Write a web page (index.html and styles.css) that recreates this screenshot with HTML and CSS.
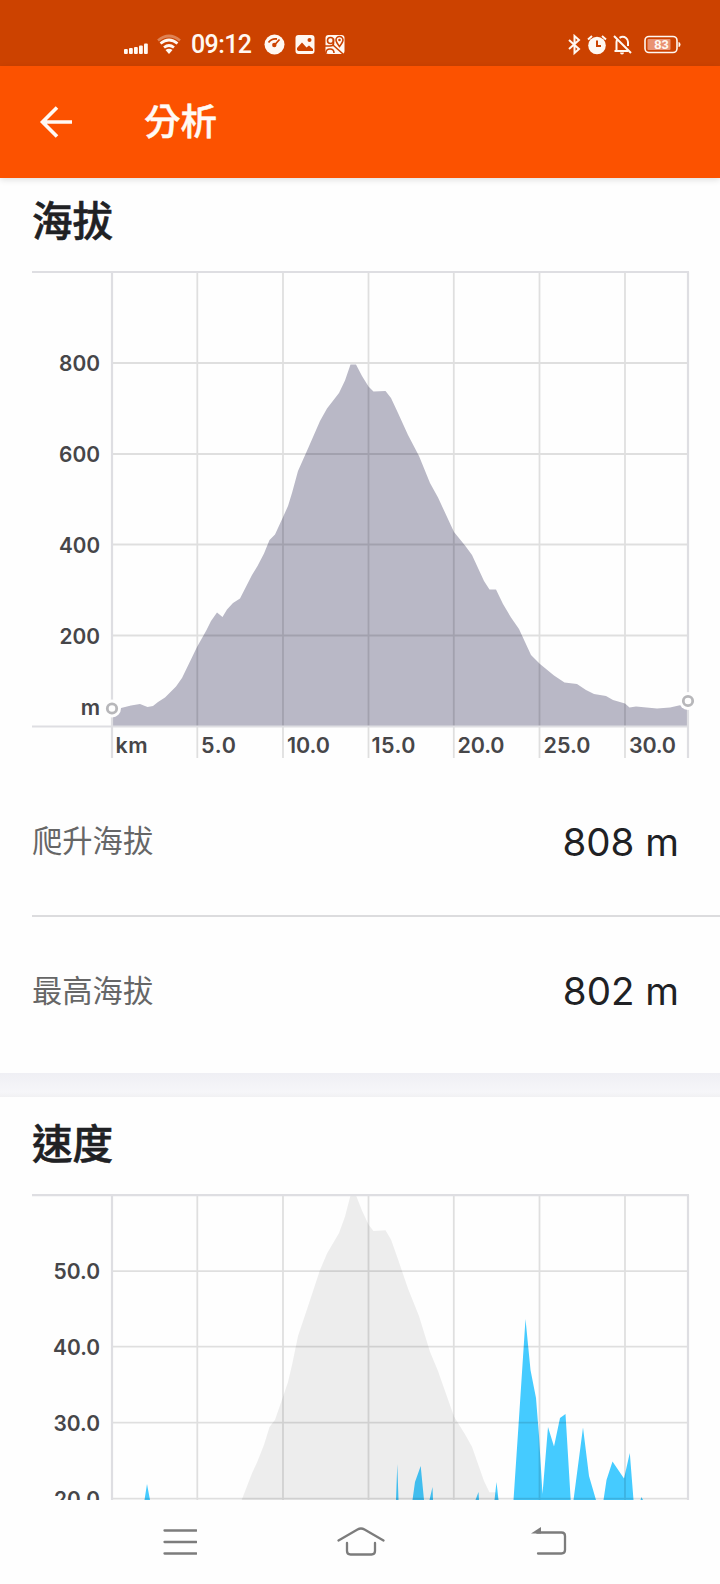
FILE: index.html
```html
<!DOCTYPE html>
<html lang="zh-Hant">
<head>
<meta charset="utf-8">
<title>分析</title>
<link rel="stylesheet" href="styles.css">
</head>
<body>
<div class="screen">
  <div class="status">
    <div class="status-group">
      <svg width="24" height="22" viewBox="0 0 24 22" fill="currentColor"><rect x="0" y="15" width="3.800" height="5" rx="1"/><rect x="5" y="14" width="3.800" height="6" rx="1"/><rect x="10" y="13" width="3.800" height="7" rx="1"/><rect x="15" y="11.500" width="3.800" height="8.500" rx="1"/><rect x="20" y="9.500" width="3.800" height="10.500" rx="1"/></svg>
      <svg class="wifi" width="24" height="22" viewBox="0 0 24 22" fill="none" stroke="currentColor" stroke-width="2.700"><path d="M1 6.500Q12-2.500 23 6.500" opacity=".35"/><path d="M3.500 9.500Q12 2.500 20.500 9.500"/><path d="M7 13.500Q12 9.500 17 13.500"/><path d="M8.500 16Q12 13.500 15.500 16L12 20z" fill="currentColor" stroke="none"/></svg>
      <span class="clock">09:12</span>
      <svg class="app" width="21" height="22" viewBox="0 0 21 22"><circle cx="10.500" cy="10.500" r="10" fill="currentColor"/><path d="M4.500 8.500Q8 4 13 5M15.500 5.500L11 10.500" fill="none" stroke="#cc4200" stroke-width="1.800"/><circle cx="10.300" cy="11" r="2.200" fill="#cc4200"/></svg>
      <svg class="app-gap" width="20" height="22" viewBox="0 0 20 22"><rect x=".5" y="1" width="19" height="19" rx="3" fill="currentColor"/><path d="M2 14L7 8.500L11.500 13.500L14 11.500L18 15V17H2z" fill="#cc4200"/><path d="M2 18V16L4 17.500z" fill="currentColor"/><circle cx="14.500" cy="6" r="2" fill="#cc4200"/></svg>
      <svg class="app-gap" width="20" height="22" viewBox="0 0 20 22"><rect x=".5" y="1" width="19" height="19" rx="3" fill="currentColor"/><g fill="none" stroke="#cc4200" stroke-width="1.600"><circle cx="5.500" cy="6.500" r="3"/><path d="M8.500 4.500V9.500Q8.500 12 5 12H0M1 19Q1 15 5 15T9 19M8 11L18 20"/><path d="M14.500 12.500Q11 8 11 6A3.500 3.500 0 0 1 18 6Q18 8 14.500 12.500z"/></g><circle cx="14.500" cy="6" r="1.300" fill="#cc4200"/></svg>
    </div>
    <div class="status-group">
      <svg width="13" height="22" viewBox="0 0 13 22" fill="none" stroke="currentColor" stroke-width="2"><path d="M1 6L11 15L6.500 19V2L11 6L1 15"/></svg>
      <svg class="alarm" width="20" height="22" viewBox="0 0 20 22"><circle cx="10" cy="11.500" r="8.800" fill="currentColor"/><path d="M1 5.500L5 2M19 5.500L15 2" stroke="currentColor" stroke-width="2"/><path d="M10 6.500V12H14" fill="none" stroke="#cc4200" stroke-width="2"/></svg>
      <svg class="bell" width="19" height="22" viewBox="0 0 19 22" fill="none" stroke="currentColor" stroke-width="2"><path d="M1 2L18 19M1.500 17H15M3.500 17V8Q3.500 6.500 4.500 5.500M6.500 3.800Q10 1.800 13 4Q15 5.500 15 8V12"/><path d="M7 18.500H11Q11 20.500 9 20.500T7 18.500z" fill="currentColor" stroke="none"/></svg>
      <svg class="battery" width="37" height="22" viewBox="0 0 37 22"><rect x="1" y="2.500" width="32" height="16" rx="4" fill="none" stroke="currentColor" stroke-width="1.600"/><path d="M34.500 8Q36.500 8 36.500 10.500T34.500 13z" fill="currentColor"/><rect x="3.500" y="5" width="23" height="11" rx="1" fill="#e99272"/><text class="charge" x="17.500" y="15" text-anchor="middle">83</text></svg>
    </div>
  </div>

  <header class="appbar">
    <svg width="34" height="34" viewBox="0 0 34 34" fill="none" stroke="currentColor" stroke-width="3.600"><path d="M33 17H4M18 2.500L3.500 17L18 31.500"/></svg>
    <h1 class="page-title">分析</h1>
  </header>

  <main class="content">
    <section class="card">
      <h2 class="heading">海拔</h2>
      <svg class="chart elevation" width="720" height="500" viewBox="0 268 720 500">
        <defs>
          <path id="profile" d="M112 726V709L121 708L131 705.500L140 704L147.500 707L153 706L158 702L165 697.500L176 686.500L182 678L190 661.500L197 647L206 631L211 621L217 612.500L222.500 617L227 609.500L233 603L240 598.500L252 575L257.500 566L264 553.500L269.500 540L275 534.500L283.500 516L288 506L292 493L298 471L308 448.500L320 421L327 408.500L339 393L345 380.500L350.500 364.500H356L362 376L368.500 386.500L373.500 391.500L385.500 391L391 398L398 413L408 435L419 456L430 483L438 497.500L454 532L465 545.500L472 555L484 581L489.500 589.500H496L503 604L511 617.500L519 629L525 642L531 655L540 664L554 675.500L564.500 682.500L577 684L586 690L594 694L606 696L613 700L625 703.500L629.500 707.500L636 706.500L657 708.500L670 707.500L681 705L688 702V726z"/>
        </defs>
        <use href="#profile" fill="#b9b8c6"/>
        <path class="grid" d="M112 363H688M112 454H688M112 544.500H688M112 635.500H688M197.300 272V758M283 272V758M368.500 272V758M453.800 272V758M539.500 272V758M625 272V758"/>
        <path class="frame" d="M32 272H689M112 272V758M688 272V758M32 726.500H689"/>
        <g class="marker-halo"><circle cx="112" cy="708.500" r="9"/><circle cx="688" cy="701" r="9"/></g>
        <g class="marker"><circle cx="112" cy="708.500" r="4.700"/><circle cx="688" cy="701" r="4.700"/></g>
        <g class="tick tick-y"><text x="100" y="370.500" textLength="41" lengthAdjust="spacingAndGlyphs">800</text><text x="100" y="461.500" textLength="41" lengthAdjust="spacingAndGlyphs">600</text><text x="100" y="552.500" textLength="41" lengthAdjust="spacingAndGlyphs">400</text><text x="100" y="643.500" textLength="40.500" lengthAdjust="spacingAndGlyphs">200</text><text x="100" y="714.500">m</text></g>
        <g class="tick"><text x="115.500" y="753.200" textLength="32">km</text><text x="201" y="753.200" textLength="35">5.0</text><text x="287" y="753.200" textLength="43">10.0</text><text x="371.500" y="753.200" textLength="44">15.0</text><text x="457.500" y="753.200" textLength="47">20.0</text><text x="543.500" y="753.200" textLength="47">25.0</text><text x="629" y="753.200" textLength="47">30.0</text></g>
      </svg>
      <dl class="stats">
        <div class="stat"><dt>爬升海拔</dt><dd>808 m</dd></div>
        <div class="stat"><dt>最高海拔</dt><dd>802 m</dd></div>
      </dl>
    </section>

    <section class="card speed">
      <h2 class="heading">速度</h2>
      <svg class="chart" width="720" height="309" viewBox="0 1191 720 309">
        <defs><clipPath id="plot"><rect x="112" y="1195" width="577" height="305"/></clipPath></defs>
        <path fill="#45cbff" d="M144.500 1500L147 1484L150 1500zM396 1500L397.300 1464L398.500 1500zM412.500 1500L415 1482L420.700 1466L424 1500zM429.500 1500L432.500 1487L433 1500zM475.500 1500L478.500 1492L479 1500zM494.500 1500L496.500 1482L498.500 1500zM513.500 1500L519 1418L525.500 1319L530.500 1370L536 1398L539 1436L542.500 1494L548 1427L554 1446.500L560 1418L565.500 1414L570.700 1500zM573.500 1500L583 1427.500L589 1476L596 1500zM603.500 1500L606.500 1480L612.500 1461.500L624 1478.500L629.800 1453L633.500 1500zM640.500 1500L641.500 1497L643 1500z"/>
        <g clip-path="url(#plot)"><use href="#profile" transform="matrix(1 0 0 1.320 0 714.200)" fill="#000" fill-opacity=".067"/></g>
        <path class="grid" d="M112 1271.200H688M112 1346.600H688M112 1422.600H688M112 1498.600H688M197.300 1195V1500M283 1195V1500M368.500 1195V1500M453.800 1195V1500M539.500 1195V1500M625 1195V1500"/>
        <path class="frame" d="M32 1195.200H689M112 1195V1500M688 1195V1500"/>
        <g class="tick tick-y"><text x="100" y="1279" textLength="46.500" lengthAdjust="spacingAndGlyphs">50.0</text><text x="100" y="1354.500" textLength="47" lengthAdjust="spacingAndGlyphs">40.0</text><text x="100" y="1430.500" textLength="46.500" lengthAdjust="spacingAndGlyphs">30.0</text><text x="100" y="1507" textLength="46" lengthAdjust="spacingAndGlyphs">20.0</text></g>
      </svg>
    </section>
  </main>

  <nav class="navbar">
    <svg width="34" height="32" viewBox="0 0 34 32"><path d="M1.500 4.500H33.500M1.500 16H33.500M1.500 27.500H33.500"/></svg>
    <svg class="home" width="48" height="32" viewBox="0 0 48 32"><path d="M1.500 14.500L20.500 3.500Q24 1.500 27.500 3.500L46.500 14.500M10 17V25Q10 28.500 13.500 28.500H34.500Q38 28.500 38 25V17"/></svg>
    <svg width="36" height="32" viewBox="0 0 36 32"><path d="M6 6.500H30.500Q34 6.500 34 10V24Q34 27.500 30.500 27.500H7"/><path class="solid" d="M0 7.500L10 1V7.500z"/></svg>
  </nav>
</div>
</body>
</html>
```

FILE: styles.css
```css
* { box-sizing: border-box; }

body {
  margin: 0;
  background: #fefefe;
  font-family: Inter, "Noto Sans CJK TC", sans-serif;
}

.screen {
  display: flex;
  flex-direction: column;
  width: 720px;
  height: 1584px;
  overflow: hidden;
}

svg { display: block; flex: none; }

.status {
  display: flex;
  justify-content: space-between;
  height: 66px;
  padding: 34px 39px 0 124px;
  background: #cc4200;
  color: #fff8f2;
}

.status-group { display: flex; align-items: center; height: 22px; }

.wifi { margin-left: 9px; }

.clock {
  width: 60px;
  margin-left: 10px;
  font: 500 25px/22px Roboto, sans-serif;
  letter-spacing: -0.600px;
}

.app { margin-left: 13px; }
.app-gap { margin-left: 10px; }
.alarm { margin-left: 6px; }
.bell { margin-left: 6px; }
.battery { margin-left: 12px; }
.charge { font: 700 13px "Liberation Sans", sans-serif; fill: #fff8f2; }

.appbar {
  display: flex;
  align-items: center;
  gap: 71px;
  height: 112px;
  padding-left: 39px;
  background: #fc5200;
  color: #fffaf5;
  box-shadow: 0 2px 6px rgba(0, 0, 0, .12);
}

.page-title {
  margin: 0;
  font-size: 36.500px;
  font-weight: 500;
  line-height: 48px;
  -webkit-text-stroke: .5px currentColor;
}

.content { height: 1322px; overflow: hidden; }

.heading {
  margin: 0;
  padding: 14px 0 0 32px;
  height: 90px;
  font-size: 40.500px;
  font-weight: 500;
  line-height: 60px;
  color: #202124;
  -webkit-text-stroke: .6px currentColor;
}

.grid { fill: none; stroke: #000; stroke-opacity: .12; stroke-width: 1.800; }
.frame { fill: none; stroke: #dedee2; stroke-width: 2.200; }
.marker-halo { fill: #fefefe; }
.marker { fill: #fefefe; stroke: #b7b7ba; stroke-width: 2.800; }
.tick { font: 600 21.500px Inter, sans-serif; fill: #464649; }
.tick-y { text-anchor: end; }

.stats { margin: 0; }

.stat {
  display: flex;
  align-items: center;
  justify-content: space-between;
  height: 147px;
  margin-left: 32px;
  padding-right: 41px;
}

.stat + .stat { height: 158px; padding-bottom: 8px; border-top: 2px solid #dcdcde; }
.stat dt { padding-bottom: 1px; font-size: 30.300px; line-height: 44px; color: #666; }
.stat dd { margin: 0; font-size: 38.500px; line-height: 48px; color: #202124; }

.speed::before {
  display: block;
  height: 24px;
  content: "";
  background: linear-gradient(#efeff4, #f6f6f9 80%, #f1f1f3);
}

.speed .heading { padding-top: 18px; height: 94px; }

.navbar {
  display: flex;
  justify-content: space-between;
  height: 84px;
  padding: 26px 153px 0 163px;
}

.home { margin-right: 6px; }

.navbar path {
  fill: none;
  stroke: #7c7c7c;
  stroke-width: 2.300;
  stroke-linecap: round;
}

.navbar .solid { fill: #7c7c7c; stroke: none; }
```
